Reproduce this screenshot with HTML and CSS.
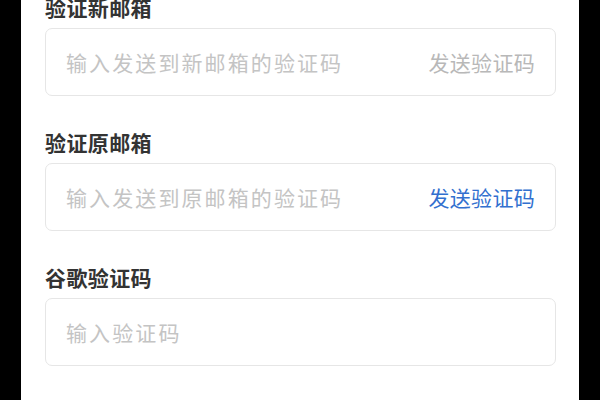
FILE: index.html
```html
<!DOCTYPE html>
<html lang="zh-CN">
<head>
<meta charset="utf-8">
<title>验证</title>
<link rel="stylesheet" href="styles.css">
</head>
<body>
<div class="screen">
  <form class="form">
    <div class="group">
      <label class="label">验证新邮箱</label>
      <div class="field">
        <input class="input" type="text" placeholder="输入发送到新邮箱的验证码">
        <span class="send disabled">发送验证码</span>
      </div>
    </div>
    <div class="group">
      <label class="label">验证原邮箱</label>
      <div class="field">
        <input class="input" type="text" placeholder="输入发送到原邮箱的验证码">
        <span class="send active">发送验证码</span>
      </div>
    </div>
    <div class="group">
      <label class="label">谷歌验证码</label>
      <div class="field">
        <input class="input" type="text" placeholder="输入验证码">
      </div>
    </div>
  </form>
</div>
</body>
</html>
```
FILE: styles.css
```css
html, body {
  margin: 0;
  padding: 0;
  height: 100%;
  background: #000;
  overflow: hidden;
}
body {
  font-family: "Noto Sans CJK SC", "Noto Sans", sans-serif;
  display: flex;
  justify-content: flex-start;
}
.screen {
  margin-left: 21px;
  width: 558px;
  height: 100%;
  background: #fff;
  box-sizing: border-box;
  padding: 0 23px 0 24px;
}
.form {
  margin-top: -8px;
  display: flex;
  flex-direction: column;
}
.group {
  display: flex;
  flex-direction: column;
  margin-bottom: 31px;
}
.label {
  height: 30px;
  line-height: 30px;
  font-size: 21px;
  font-weight: 700;
  letter-spacing: 0.4px;
  color: #333;
  margin-bottom: 6px;
}
.field {
  height: 68px;
  box-sizing: border-box;
  border: 1.5px solid #e6e6e6;
  border-radius: 7px;
  display: flex;
  align-items: center;
  padding: 0 20px;
}
.input {
  flex: 1;
  min-width: 0;
  border: none;
  outline: none;
  background: transparent;
  padding: 0;
  font-family: inherit;
  font-size: 21px;
  letter-spacing: 2.1px;
  color: #333;
}
.input::placeholder {
  color: #c4c4c4;
}
.send {
  font-size: 21px;
  letter-spacing: 0.3px;
  white-space: nowrap;
}
.send.disabled {
  color: #b8b8b8;
}
.send.active {
  color: #3270cf;
}
```
